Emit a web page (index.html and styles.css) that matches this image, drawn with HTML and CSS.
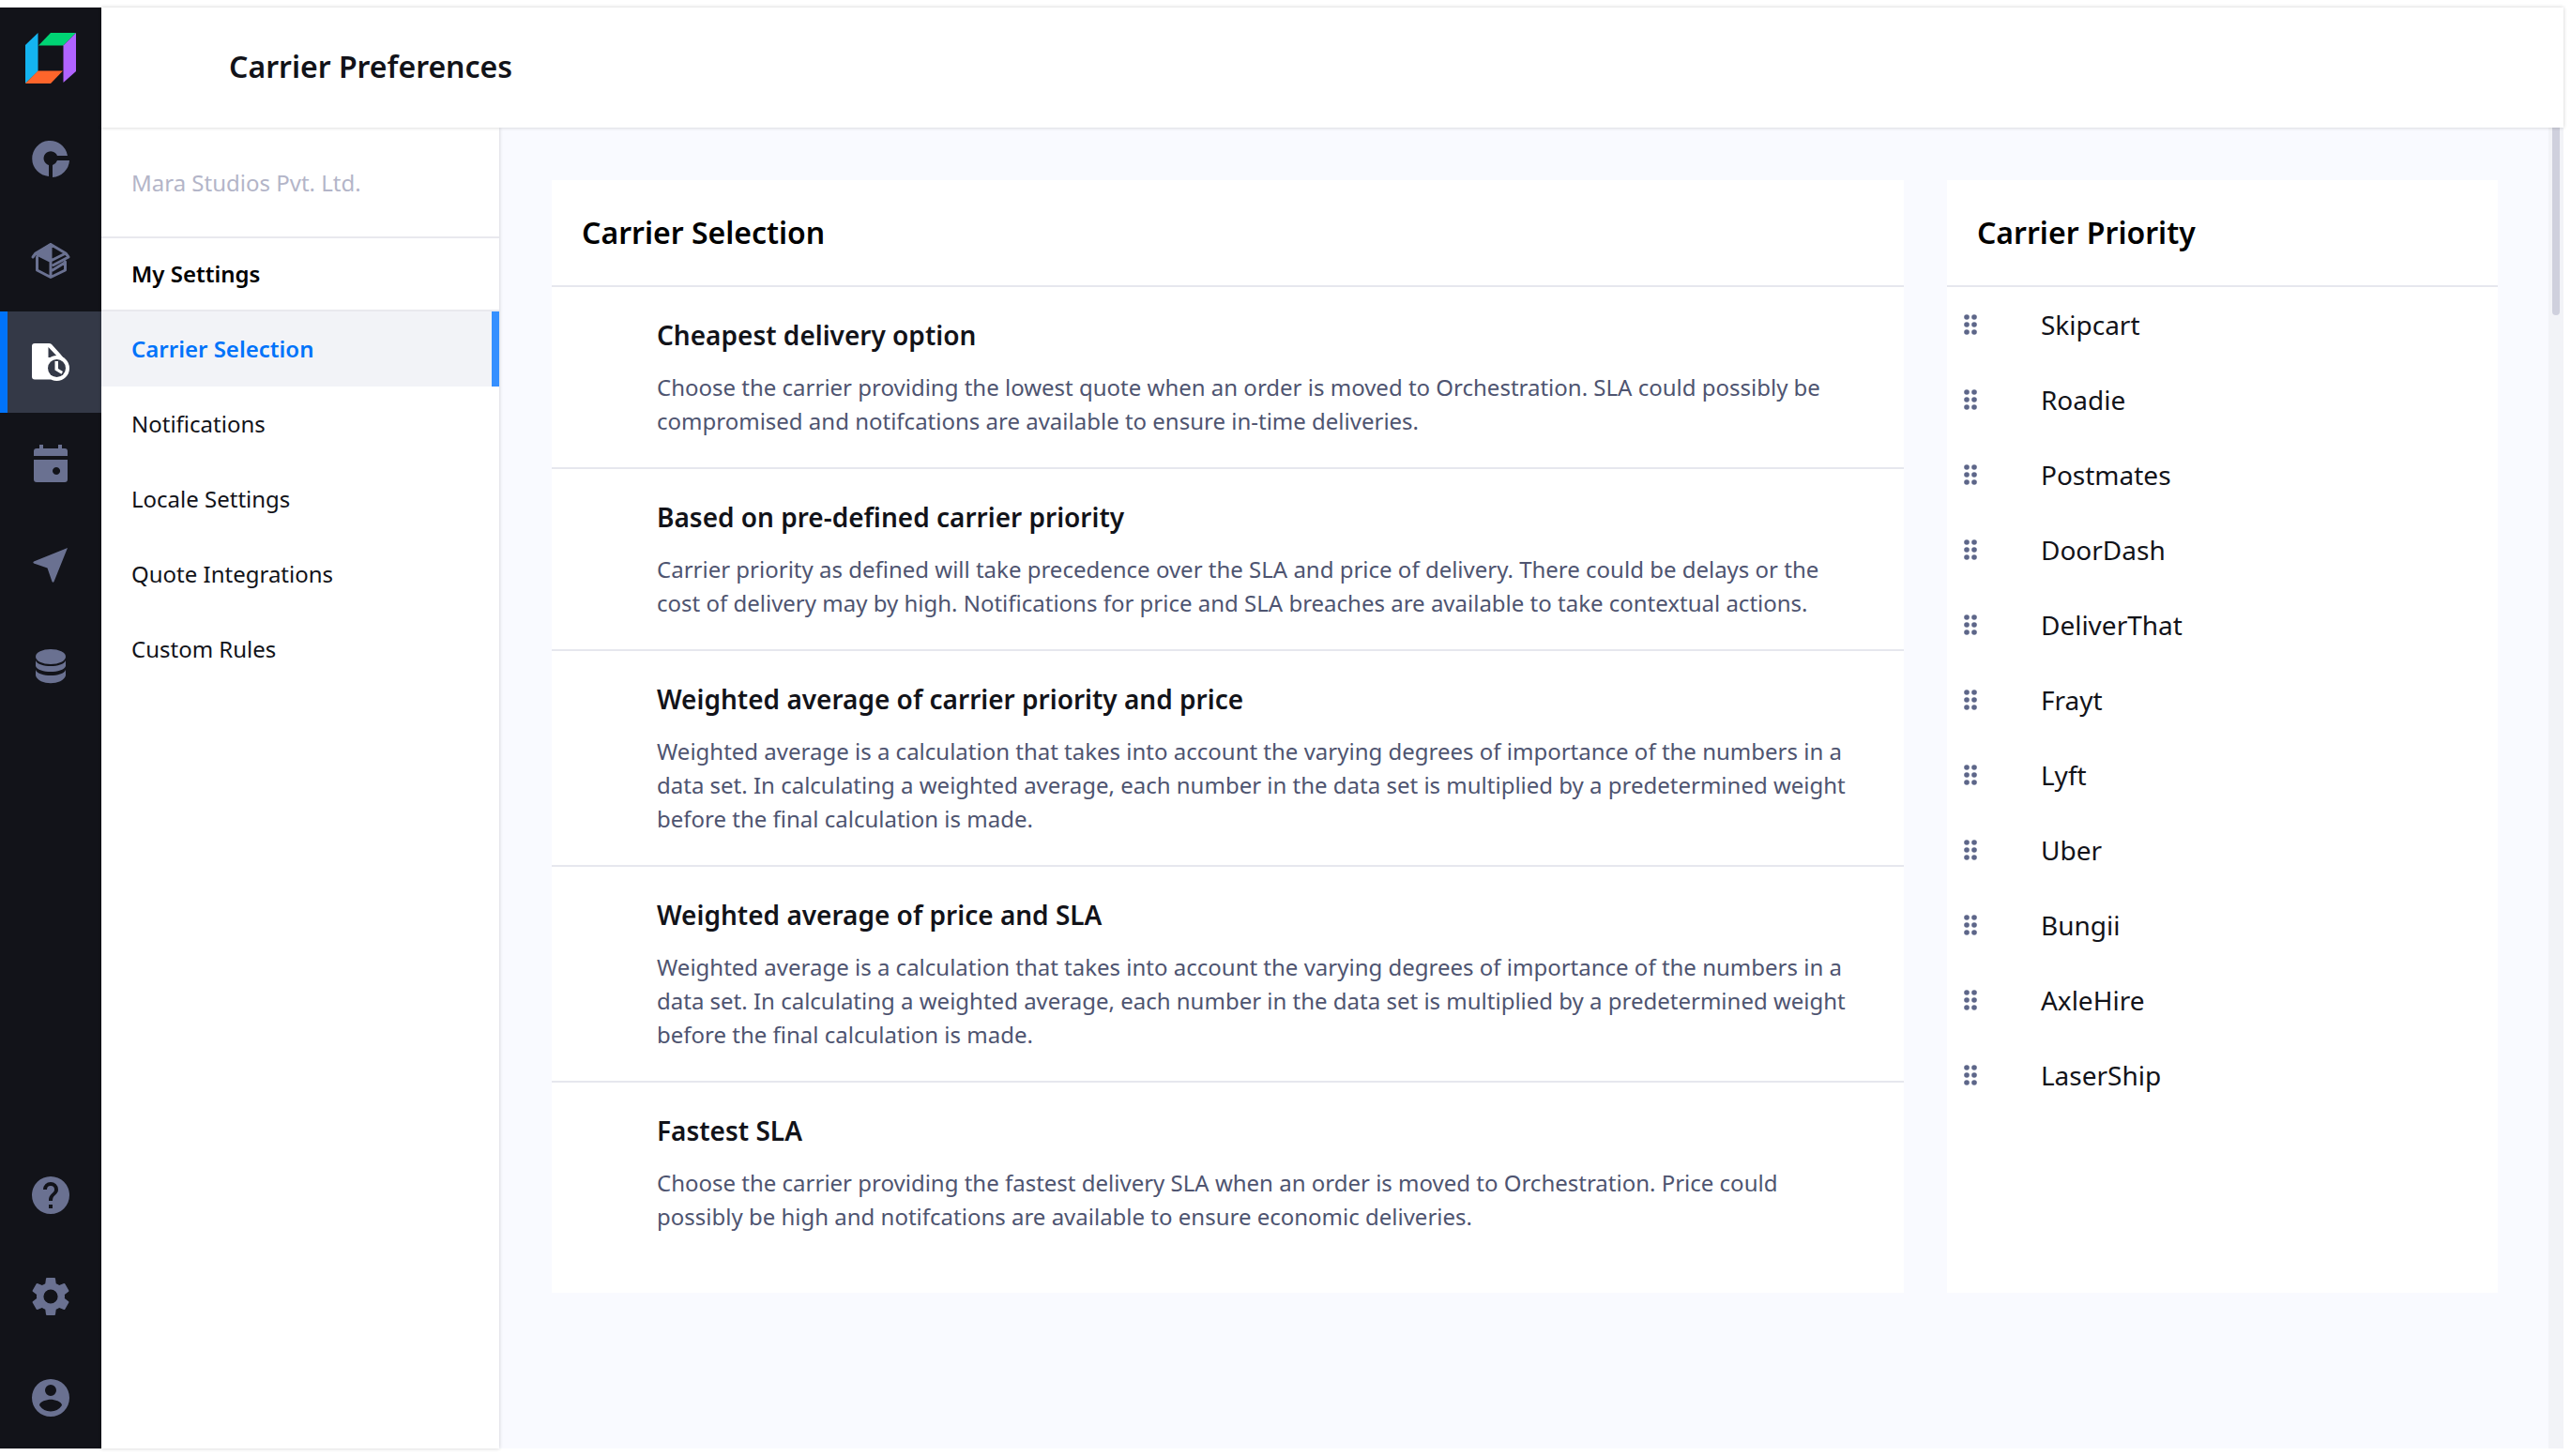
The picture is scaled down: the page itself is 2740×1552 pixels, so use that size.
FILE: index.html
```html
<!DOCTYPE html>
<html lang="en">
<head>
<meta charset="utf-8">
<title>Carrier Preferences</title>
<link rel="stylesheet" href="styles.css">
</head>
<body>
<div class="app">
  <nav class="rail" aria-label="Main">
    <a class="rail-item" href="#" aria-label="Home">
      <svg class="logo" viewBox="0 0 54 54"><path fill="#14b4f0" d="M0 13 13.500 0v41L0 54z"/><path fill="#00d474" d="M14 13.500 27 0h27L40.500 13.500z"/><path fill="#b063ff" d="M40.500 13.500 54 0v41L40.500 53z"/><path fill="#ff652b" d="M0 54 13.500 40.500H40L27 54z"/></svg>
    </a>
    <a class="rail-item" href="#" aria-label="Dashboard">
      <svg class="icon" viewBox="0 0 48 48"><path d="M22 42A19 19 0 1 1 42 20H31A7.500 7.500 0 1 0 22 30z"/><path d="M26 43V30a8 8 0 0 0 5-5h13a20 19 0 0 1-18 18z"/></svg>
    </a>
    <a class="rail-item" href="#" aria-label="Packages">
      <svg class="icon" viewBox="0 0 48 48"><path d="M24 5 7 16l17 9z"/><g fill="none" stroke="currentColor" stroke-width="3" stroke-linejoin="round" stroke-linecap="round"><path d="M24 6.500 40 16l3 4-16 8.500M24 24 40 16M24 6.500 8 16l-3 4M9 17l15 7.500M9.500 20v14L24 41.500 39.500 34v-9M24 8v33M26 34l13-8"/></g></svg>
    </a>
    <a class="rail-item current" href="#" aria-label="Orders" aria-current="page">
      <svg class="icon" viewBox="0 0 48 48"><path fill-rule="evenodd" d="M7 4h15q2 0 3 1l9 10 5 6v10L24 42.500H7q-3 0-3-3V7q0-3 3-3zm14.500 4v11H32z"/><circle cx="30.500" cy="30.500" r="13.500"/><circle class="clock-face" cx="30.500" cy="30.500" r="9.500"/><path d="M28.500 23h3.500v8l5 3-1.500 2.800-7-4.300z"/></svg>
    </a>
    <a class="rail-item" href="#" aria-label="Calendar">
      <svg class="icon" viewBox="0 0 48 48"><path fill-rule="evenodd" d="M12 4h4v4h16V4h4v4h3q3 0 3 3v5H6v-5q0-3 3-3h3zM6 20h36v21q0 3-3 3H9q-3 0-3-3zm24 8a4 4 0 1 0 .1 0z"/></svg>
    </a>
    <a class="rail-item" href="#" aria-label="Dispatch">
      <svg class="icon" viewBox="0 0 48 48"><path d="M42 6 27.500 42q-1 1.500-2 0L20.500 27.500 6 22.500q-1.500-1 0-2z"/></svg>
    </a>
    <a class="rail-item" href="#" aria-label="Data">
      <svg class="icon" viewBox="0 0 48 48"><ellipse cx="24" cy="14" rx="16" ry="8"/><path d="M8 18c3 8 29 8 32 0v6c-3 8-29 8-32 0zM8 28c3 8 29 8 32 0v6c-3 11-29 11-32 0z"/></svg>
    </a>
    <a class="rail-item rail-end" href="#" aria-label="Help">
      <svg class="icon" viewBox="0 0 24 24"><path d="M12 2a10 10 0 1 0 0 20 10 10 0 0 0 0-20zm1 17h-2v-2h2v2zm2.070-7.750-.9.920C13.450 12.900 13 13.500 13 15h-2v-.5c0-1.100.45-2.100 1.170-2.830l1.240-1.260c.37-.36.59-.86.59-1.410a2 2 0 1 0-4 0H8a4 4 0 1 1 8 0c0 .88-.36 1.680-.93 2.250z"/></svg>
    </a>
    <a class="rail-item" href="#" aria-label="Settings">
      <svg class="icon" viewBox="0 0 24 24"><path d="M19.430 12.980c.04-.32.07-.64.07-.98s-.03-.66-.07-.98l2.110-1.650c.19-.15.24-.42.12-.64l-2-3.460c-.12-.22-.39-.3-.61-.22l-2.490 1c-.52-.4-1.080-.73-1.690-.98l-.38-2.650A.488.488 0 0 0 14 2h-4c-.25 0-.46.18-.49.420l-.38 2.650c-.61.25-1.170.59-1.690.98l-2.490-1c-.23-.09-.49 0-.61.22l-2 3.460c-.13.22-.07.49.12.64l2.110 1.650c-.04.32-.07.65-.07.98s.03.66.07.98l-2.110 1.650c-.19.15-.24.42-.12.64l2 3.460c.12.22.39.3.61.22l2.490-1c.52.4 1.080.73 1.690.98l.38 2.650c.03.24.24.42.49.42h4c.25 0 .46-.18.49-.42l.38-2.650c.61-.25 1.170-.59 1.690-.98l2.490 1c.23.09.49 0 .61-.22l2-3.460c.12-.22.07-.49-.12-.64l-2.110-1.650zM12 15.800a3.800 3.800 0 1 1 0-7.600 3.800 3.800 0 0 1 0 7.600z"/></svg>
    </a>
    <a class="rail-item" href="#" aria-label="Account">
      <svg class="icon" viewBox="0 0 24 24"><path d="M12 2a10 10 0 1 0 0 20 10 10 0 0 0 0-20zm0 3a3 3 0 1 1 0 6 3 3 0 0 1 0-6zm0 14.200a7.200 7.200 0 0 1-6-3.220c.03-1.990 4-3.080 6-3.080 1.990 0 5.970 1.090 6 3.080a7.200 7.200 0 0 1-6 3.220z"/></svg>
    </a>
  </nav>
  <div class="shell">
    <header class="topbar"><h1>Carrier Preferences</h1></header>
    <div class="body">
      <aside class="side">
        <p class="company">Mara Studios Pvt. Ltd.</p>
        <h2 class="side-title">My Settings</h2>
        <nav class="side-nav" aria-label="Settings">
          <a class="selected" href="#" aria-current="page">Carrier Selection</a>
          <a href="#">Notifications</a>
          <a href="#">Locale Settings</a>
          <a href="#">Quote Integrations</a>
          <a href="#">Custom Rules</a>
        </nav>
      </aside>
      <main class="main">
        <section class="card selection">
          <h2 class="card-title">Carrier Selection</h2>
          <article class="option"><h3>Cheapest delivery option</h3><p>Choose the carrier providing the lowest quote when an order is moved to Orchestration. SLA could possibly be compromised and notifcations are available to ensure in-time deliveries.</p></article>
          <article class="option"><h3>Based on pre-defined carrier priority</h3><p>Carrier priority as defined will take precedence over the SLA and price of delivery. There could be delays or the cost of delivery may by high. Notifications for price and SLA breaches are available to take contextual actions.</p></article>
          <article class="option"><h3>Weighted average of carrier priority and price</h3><p>Weighted average is a calculation that takes into account the varying degrees of importance of the numbers in a data set. In calculating a weighted average, each number in the data set is multiplied by a predetermined weight before the final calculation is made.</p></article>
          <article class="option"><h3>Weighted average of price and SLA</h3><p>Weighted average is a calculation that takes into account the varying degrees of importance of the numbers in a data set. In calculating a weighted average, each number in the data set is multiplied by a predetermined weight before the final calculation is made.</p></article>
          <article class="option"><h3>Fastest SLA</h3><p>Choose the carrier providing the fastest delivery SLA when an order is moved to Orchestration. Price could possibly be high and notifcations are available to ensure economic deliveries.</p></article>
        </section>
        <section class="card priority">
          <h2 class="card-title">Carrier Priority</h2>
          <ol class="carriers">
            <li><svg class="grip" viewBox="0 0 14 22"><use href="#dots"/></svg>Skipcart</li>
            <li><svg class="grip" viewBox="0 0 14 22"><use href="#dots"/></svg>Roadie</li>
            <li><svg class="grip" viewBox="0 0 14 22"><use href="#dots"/></svg>Postmates</li>
            <li><svg class="grip" viewBox="0 0 14 22"><use href="#dots"/></svg>DoorDash</li>
            <li><svg class="grip" viewBox="0 0 14 22"><use href="#dots"/></svg>DeliverThat</li>
            <li><svg class="grip" viewBox="0 0 14 22"><use href="#dots"/></svg>Frayt</li>
            <li><svg class="grip" viewBox="0 0 14 22"><use href="#dots"/></svg>Lyft</li>
            <li><svg class="grip" viewBox="0 0 14 22"><use href="#dots"/></svg>Uber</li>
            <li><svg class="grip" viewBox="0 0 14 22"><use href="#dots"/></svg>Bungii</li>
            <li><svg class="grip" viewBox="0 0 14 22"><use href="#dots"/></svg>AxleHire</li>
            <li><svg class="grip" viewBox="0 0 14 22"><use href="#dots"/></svg>LaserShip</li>
          </ol>
        </section>
      </main>
      <div class="track"><div class="thumb"></div></div>
    </div>
  </div>
</div>
<svg class="defs" aria-hidden="true"><defs><g id="dots"><circle cx="3" cy="3" r="2.800"/><circle cx="11" cy="3" r="2.800"/><circle cx="3" cy="11" r="2.800"/><circle cx="11" cy="11" r="2.800"/><circle cx="3" cy="19" r="2.800"/><circle cx="11" cy="19" r="2.800"/></g></defs></svg>
</body>
</html>
```
FILE: styles.css
```css
* { box-sizing: border-box; }
html, body { height: 100%; }
body, h1, h2, h3, p, ol { margin: 0; padding: 0; }
body { font-family: "Noto Sans", sans-serif; font-size: 24px; line-height: 36px; color: #121319; background: #fff; }
a { color: inherit; text-decoration: none; }
.defs { position: absolute; width: 0; height: 0; }
.app { display: flex; min-height: 100%; padding: 8px 8px 8px 0; }

.rail { flex: none; display: flex; flex-direction: column; width: 108px; background: #121319; color: #6a7191; }
.rail-item { display: flex; align-items: center; justify-content: center; height: 108px; }
.rail-item.current { color: #fff; background: #343947; box-shadow: inset 8px 0 #0073fa; }
.rail-end { margin-top: auto; }
.logo { width: 54px; height: 54px; }
.icon { width: 48px; height: 48px; fill: currentColor; }
.clock-face { fill: #343947; }

.shell { flex: 1; min-width: 0; display: flex; flex-direction: column; }
.topbar { position: relative; z-index: 1; display: flex; align-items: center; height: 128px; padding: 0 32px 2px 136px; background: #fff; box-shadow: 0 0 4px rgba(0, 0, 0, .2); }
h1 { font-size: 32px; font-weight: 600; line-height: 44px; }

.body { flex: 1; display: flex; background: #f9faff; }
.side { flex: none; width: 424px; background: #fff; box-shadow: 0 0 4px rgba(0, 0, 0, .2); }
.company { padding: 41px 32px 39px; border-bottom: 2px solid #e9e9ee; color: #b3b5c8; }
.side-title { padding: 20px 32px; border-bottom: 2px solid #e9e9ee; font-size: 24px; font-weight: 600; color: #000; }
.side-nav a { display: block; padding: 22px 32px; }
.side-nav .selected { color: #0073fa; font-weight: 600; background: #f2f3f7; box-shadow: inset -8px 0 #3690ff; }

.main { flex: 1; min-width: 0; display: grid; grid-template-columns: minmax(0, 27fr) minmax(0, 11fr); align-content: start; gap: 46px; padding: 56px 54px 56px 56px; }
.card { background: #fff; }
.selection { padding-bottom: 32px; }
.card-title { padding: 34px 32px; border-bottom: 2px solid #e6e7ee; font-size: 32px; font-weight: 600; line-height: 44px; color: #000; }
.option { padding: 33px 50px 31px 112px; border-bottom: 2px solid #e6e7ee; color: #4e5470; }
.option:last-child { border-bottom: 0; }
h3 { margin-bottom: 20px; font-size: 28px; font-weight: 600; line-height: 36px; color: #121319; }
.carriers { list-style: none; font-size: 28px; }
.carriers li { display: flex; align-items: center; gap: 68px; height: 80px; padding-left: 18px; }
.grip { width: 14px; height: 22px; fill: #5d6689; }

.track { flex: none; width: 16px; background: #f2f3f7; }
.thumb { width: 8px; height: 200px; margin: 0 auto; border-radius: 0 0 4px 4px; background: #cfd0dd; }
```
